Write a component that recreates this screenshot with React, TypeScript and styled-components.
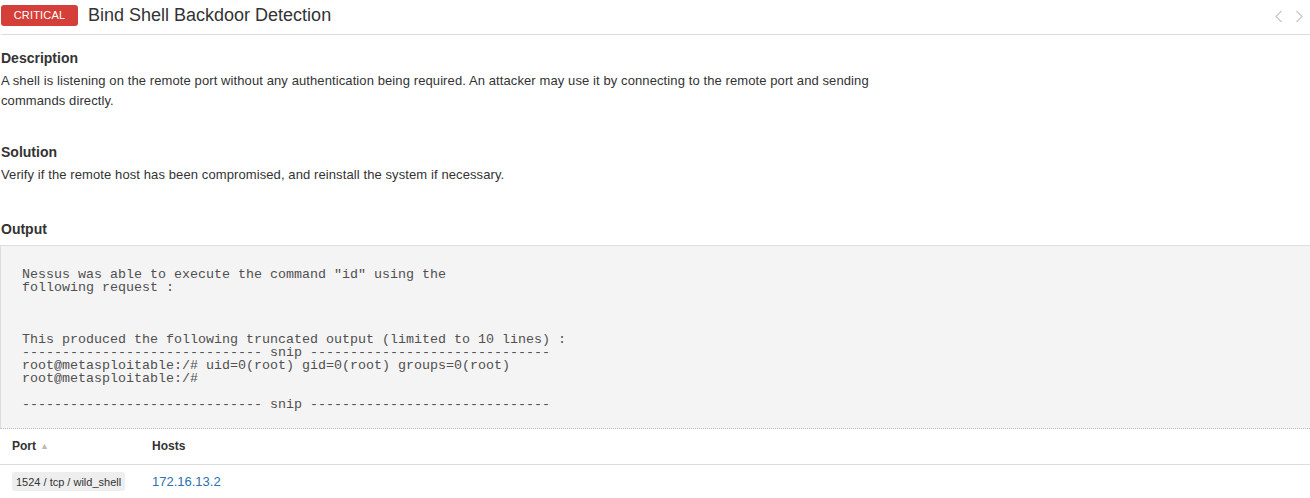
import React from "react";
import styled, { createGlobalStyle } from "styled-components";

const Global = createGlobalStyle`
  html, body { margin: 0; padding: 0; background: #fff; }
  body { font-family: "Liberation Sans", Arial, sans-serif; color: #333; overflow: hidden; }
  * { box-sizing: border-box; }
`;

const Page = styled.div`
  width: 1310px;
  height: 498px;
  overflow: hidden;
`;

const Header = styled.div`
  display: flex;
  align-items: center;
  height: 35px;
  border-bottom: 1px solid #ddd;
  margin-left: 1px;
  padding-bottom: 4px;
`;

const Badge = styled.span`
  display: inline-flex;
  align-items: center;
  justify-content: center;
  width: 77px;
  height: 21px;
  background: #d43f3a;
  color: #fff;
  font-size: 11px;
  border-radius: 3px;
  letter-spacing: 0.2px;
`;

const Title = styled.h1`
  margin: 0 0 0 10px;
  font-size: 18px;
  font-weight: normal;
  color: #333;
  flex: 1;
`;

const Nav = styled.div`
  display: flex;
  gap: 12px;
  margin-right: 6px;
  margin-top: 2px;
`;

const Body = styled.div`
  padding-top: 13px;
`;

const Section = styled.section<{ $gap: number }>`
  margin-bottom: ${(p) => p.$gap}px;
`;

const Heading = styled.h3`
  margin: 0 0 3px 1px;
  font-size: 14px;
  line-height: 20px;
  font-weight: bold;
  color: #333;
`;

const Text = styled.p`
  margin: 0 0 0 1px;
  font-size: 13px;
  letter-spacing: 0.1px;
  line-height: 20px;
  max-width: 880px;
`;

const OutputHeading = styled(Heading)`
  margin-bottom: 6px;
`;

const Pre = styled.pre`
  margin: 0;
  width: 1320px;
  background: #f4f4f4;
  border-top: 1px solid #ddd;
  border-left: 1px solid #ddd;
  border-bottom: 1px dotted #bbb;
  padding: 22px 21px 17px;
  font-family: "Liberation Mono", "Courier New", monospace;
  font-size: 13.33px;
  line-height: 13px;
  color: #505050;
`;

const Table = styled.table`
  border-collapse: collapse;
  width: 1310px;
  font-size: 12px;
`;

const Th = styled.th<{ $w?: number }>`
  text-align: left;
  font-weight: bold;
  height: 35px;
  padding: 0 0 0 12px;
  border-bottom: 1px solid #ddd;
  color: #333;
  width: ${(p) => (p.$w ? `${p.$w}px` : "auto")};
`;

const Td = styled.td`
  height: 34px;
  padding: 0 0 0 12px;
  vertical-align: middle;
`;

const SortArrow = styled.span`
  color: #bbb;
  font-size: 9px;
  margin-left: 4px;
  position: relative;
  top: -1px;
`;

const PortPill = styled.span`
  display: inline-block;
  background: #eee;
  border-radius: 3px;
  font-size: 11px;
  padding: 3px 4px 2px;
  line-height: 14px;
  color: #333;
`;

const HostLink = styled.a`
  color: #2a72b0;
  font-size: 13px;
  text-decoration: none;
`;

const Chevron = ({ dir }: { dir: "left" | "right" }) => (
  <svg width="9" height="13" viewBox="0 0 9 13" fill="none">
    <path
      d={dir === "left" ? "M7.5 1 L2 6.5 L7.5 12" : "M1.5 1 L7 6.5 L1.5 12"}
      stroke="#c9c9c9"
      strokeWidth="1.3"
    />
  </svg>
);

const output = `Nessus was able to execute the command "id" using the
following request :



This produced the following truncated output (limited to 10 lines) :
------------------------------ snip ------------------------------
root@metasploitable:/# uid=0(root) gid=0(root) groups=0(root)
root@metasploitable:/#

------------------------------ snip ------------------------------`;

export default function App() {
  return (
    <Page>
      <Global />
      <Header>
        <Badge>CRITICAL</Badge>
        <Title>Bind Shell Backdoor Detection</Title>
        <Nav>
          <Chevron dir="left" />
          <Chevron dir="right" />
        </Nav>
      </Header>
      <Body>
        <Section $gap={31}>
          <Heading>Description</Heading>
          <Text>
            A shell is listening on the remote port without any authentication being required. An attacker may use it by
            connecting to the remote port and sending commands directly.
          </Text>
        </Section>
        <Section $gap={34}>
          <Heading>Solution</Heading>
          <Text>Verify if the remote host has been compromised, and reinstall the system if necessary.</Text>
        </Section>
        <section>
          <OutputHeading>Output</OutputHeading>
          <Pre>{output}</Pre>
          <Table>
            <thead>
              <tr>
                <Th $w={140}>
                  Port<SortArrow>▲</SortArrow>
                </Th>
                <Th>Hosts</Th>
              </tr>
            </thead>
            <tbody>
              <tr>
                <Td>
                  <PortPill>1524 / tcp / wild_shell</PortPill>
                </Td>
                <Td>
                  <HostLink href="#">172.16.13.2</HostLink>
                </Td>
              </tr>
            </tbody>
          </Table>
        </section>
      </Body>
    </Page>
  );
}
